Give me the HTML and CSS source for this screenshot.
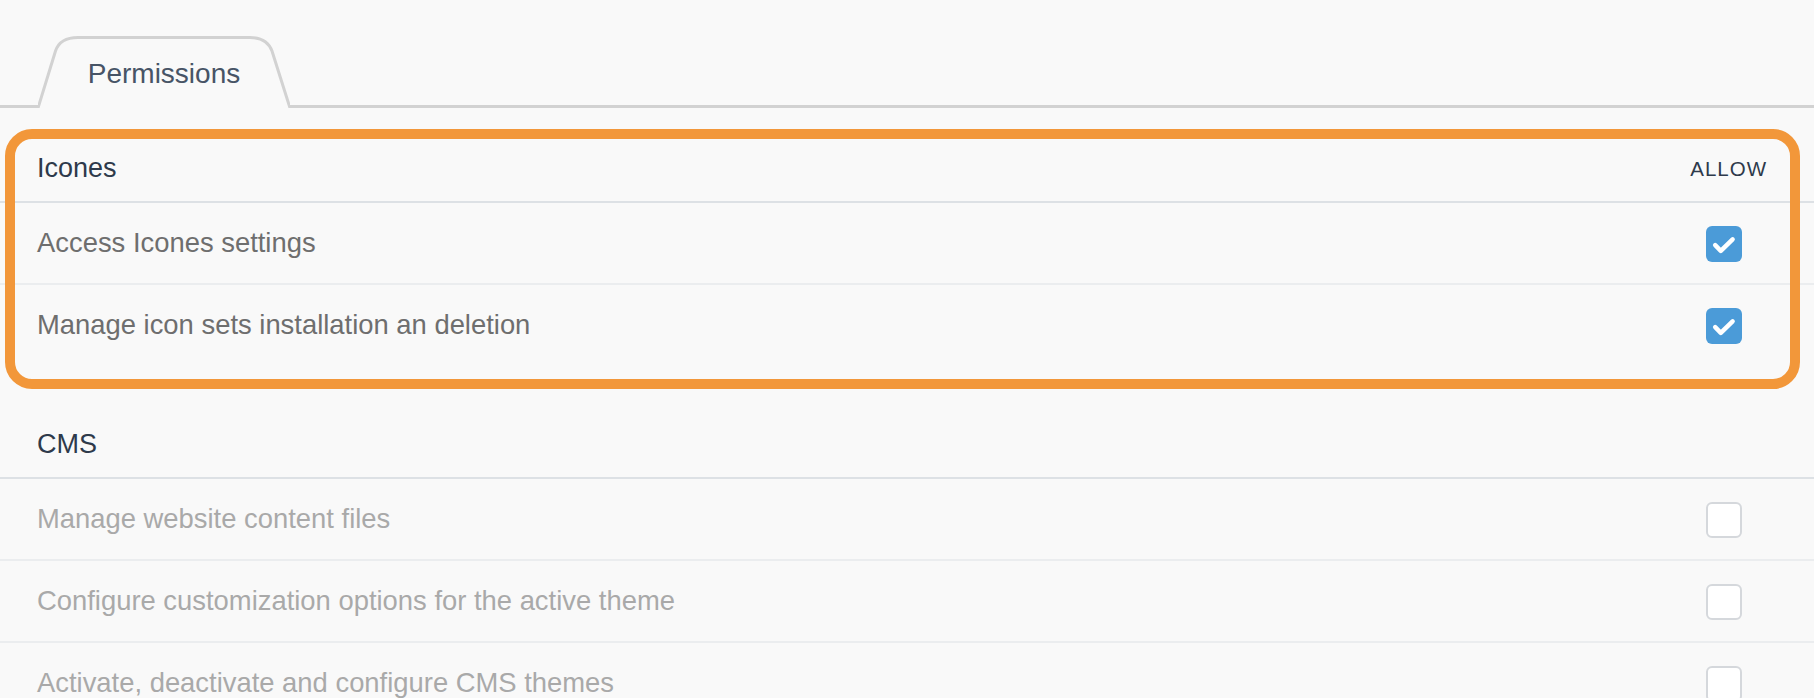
FILE: index.html
```html
<!DOCTYPE html>
<html lang="en">
<head>
<meta charset="utf-8">
<title>Permissions</title>
<link rel="stylesheet" href="styles.css">
</head>
<body>
<div class="page">
  <div class="tabbar">
    <div class="tab">
      <svg class="tab-shape" width="252" height="72" viewBox="0 0 252 72" aria-hidden="true">
        <path d="M0,72.5 L17.5,15 Q22,1.5 40,1.5 L212,1.5 Q229,1.5 234,15 L252,72.5 Z" fill="#f9f9f9" stroke="none"/>
        <path d="M0,72 L17.5,15 Q22,1.5 40,1.5 L212,1.5 Q229,1.5 234,15 L252,72" fill="none" stroke="#d2d2d2" stroke-width="3"/>
      </svg>
      <span class="tab-label">Permissions</span>
    </div>
  </div>

  <section class="section section-first">
    <div class="highlight"></div>
    <div class="sec-head">
      <span class="sec-title">Icones</span>
      <span class="sec-allow">ALLOW</span>
    </div>
    <div class="row">
      <span class="row-label">Access Icones settings</span>
      <span class="cb cb-on">
        <svg width="36" height="36" viewBox="0 0 36 36" aria-hidden="true"><path d="M9.2,19.2 L14.8,24.8 L26.6,13.4" fill="none" stroke="#fff" stroke-width="4.5" stroke-linecap="round" stroke-linejoin="round"/></svg>
      </span>
    </div>
    <div class="row">
      <span class="row-label">Manage icon sets installation an deletion</span>
      <span class="cb cb-on">
        <svg width="36" height="36" viewBox="0 0 36 36" aria-hidden="true"><path d="M9.2,19.2 L14.8,24.8 L26.6,13.4" fill="none" stroke="#fff" stroke-width="4.5" stroke-linecap="round" stroke-linejoin="round"/></svg>
      </span>
    </div>
  </section>

  <section class="section section-next">
    <div class="sec-head">
      <span class="sec-title">CMS</span>
    </div>
    <div class="row">
      <span class="row-label muted">Manage website content files</span>
      <span class="cb cb-off"></span>
    </div>
    <div class="row">
      <span class="row-label muted">Configure customization options for the active theme</span>
      <span class="cb cb-off"></span>
    </div>
    <div class="row">
      <span class="row-label muted">Activate, deactivate and configure CMS themes</span>
      <span class="cb cb-off"></span>
    </div>
  </section>
</div>
</body>
</html>
```

FILE: styles.css
```css
html, body {
  margin: 0;
  padding: 0;
  background: #f9f9f9;
}

body {
  font-family: "Liberation Sans", Arial, sans-serif;
  overflow: hidden;
}

.page {
  width: 1814px;
  height: 698px;
  overflow: hidden;
}

.tabbar {
  display: flex;
  align-items: flex-end;
  height: 105px;
  padding-left: 38px;
  border-bottom: 3px solid #d2d2d2;
}

.tab {
  position: relative;
  width: 252px;
  height: 72px;
  margin-bottom: -3px;
  display: flex;
  align-items: center;
  justify-content: center;
  padding-top: 3px;
  box-sizing: border-box;
}

.tab-shape {
  position: absolute;
  left: 0;
  top: 0;
}

.tab-label {
  position: relative;
  font-size: 28px;
  color: #475466;
  line-height: 1;
}

.section {
  position: relative;
}

.section-first {
  padding-top: 28px;
}

.section-next {
  padding-top: 45px;
}

.highlight {
  position: absolute;
  left: 5px;
  top: 21px;
  right: 14px;
  bottom: -22px;
  border: 10px solid #f2973a;
  border-radius: 27px;
  box-sizing: border-box;
  pointer-events: none;
  z-index: 2;
}

.sec-head {
  display: flex;
  align-items: center;
  justify-content: space-between;
  height: 67px;
  box-sizing: border-box;
  padding: 0 47px 0 37px;
  border-bottom: 2px solid #dde1e5;
}

.sec-title {
  font-size: 27px;
  color: #2e3a4b;
}

.sec-allow {
  font-size: 20.5px;
  letter-spacing: 1px;
  color: #2e3a4b;
}

.row {
  display: flex;
  align-items: center;
  justify-content: space-between;
  height: 82px;
  box-sizing: border-box;
  padding: 0 72px 0 37px;
  border-bottom: 2px solid #ebedef;
}

.row:last-child {
  border-bottom-color: transparent;
}

.section-next .row:last-child {
  border-bottom-color: #ebedef;
}

.row-label {
  font-size: 27.4px;
  color: #6e6e6e;
}

.row-label.muted {
  color: #a9a9a9;
}

.cb {
  display: block;
  width: 36px;
  height: 36px;
  border-radius: 6px;
  box-sizing: border-box;
  margin-top: 1px;
}

.cb svg {
  display: block;
}

.cb-on {
  background: #4b9bd8;
}

.cb-off {
  background: #ffffff;
  border: 2px solid #d5d8dc;
}
```
